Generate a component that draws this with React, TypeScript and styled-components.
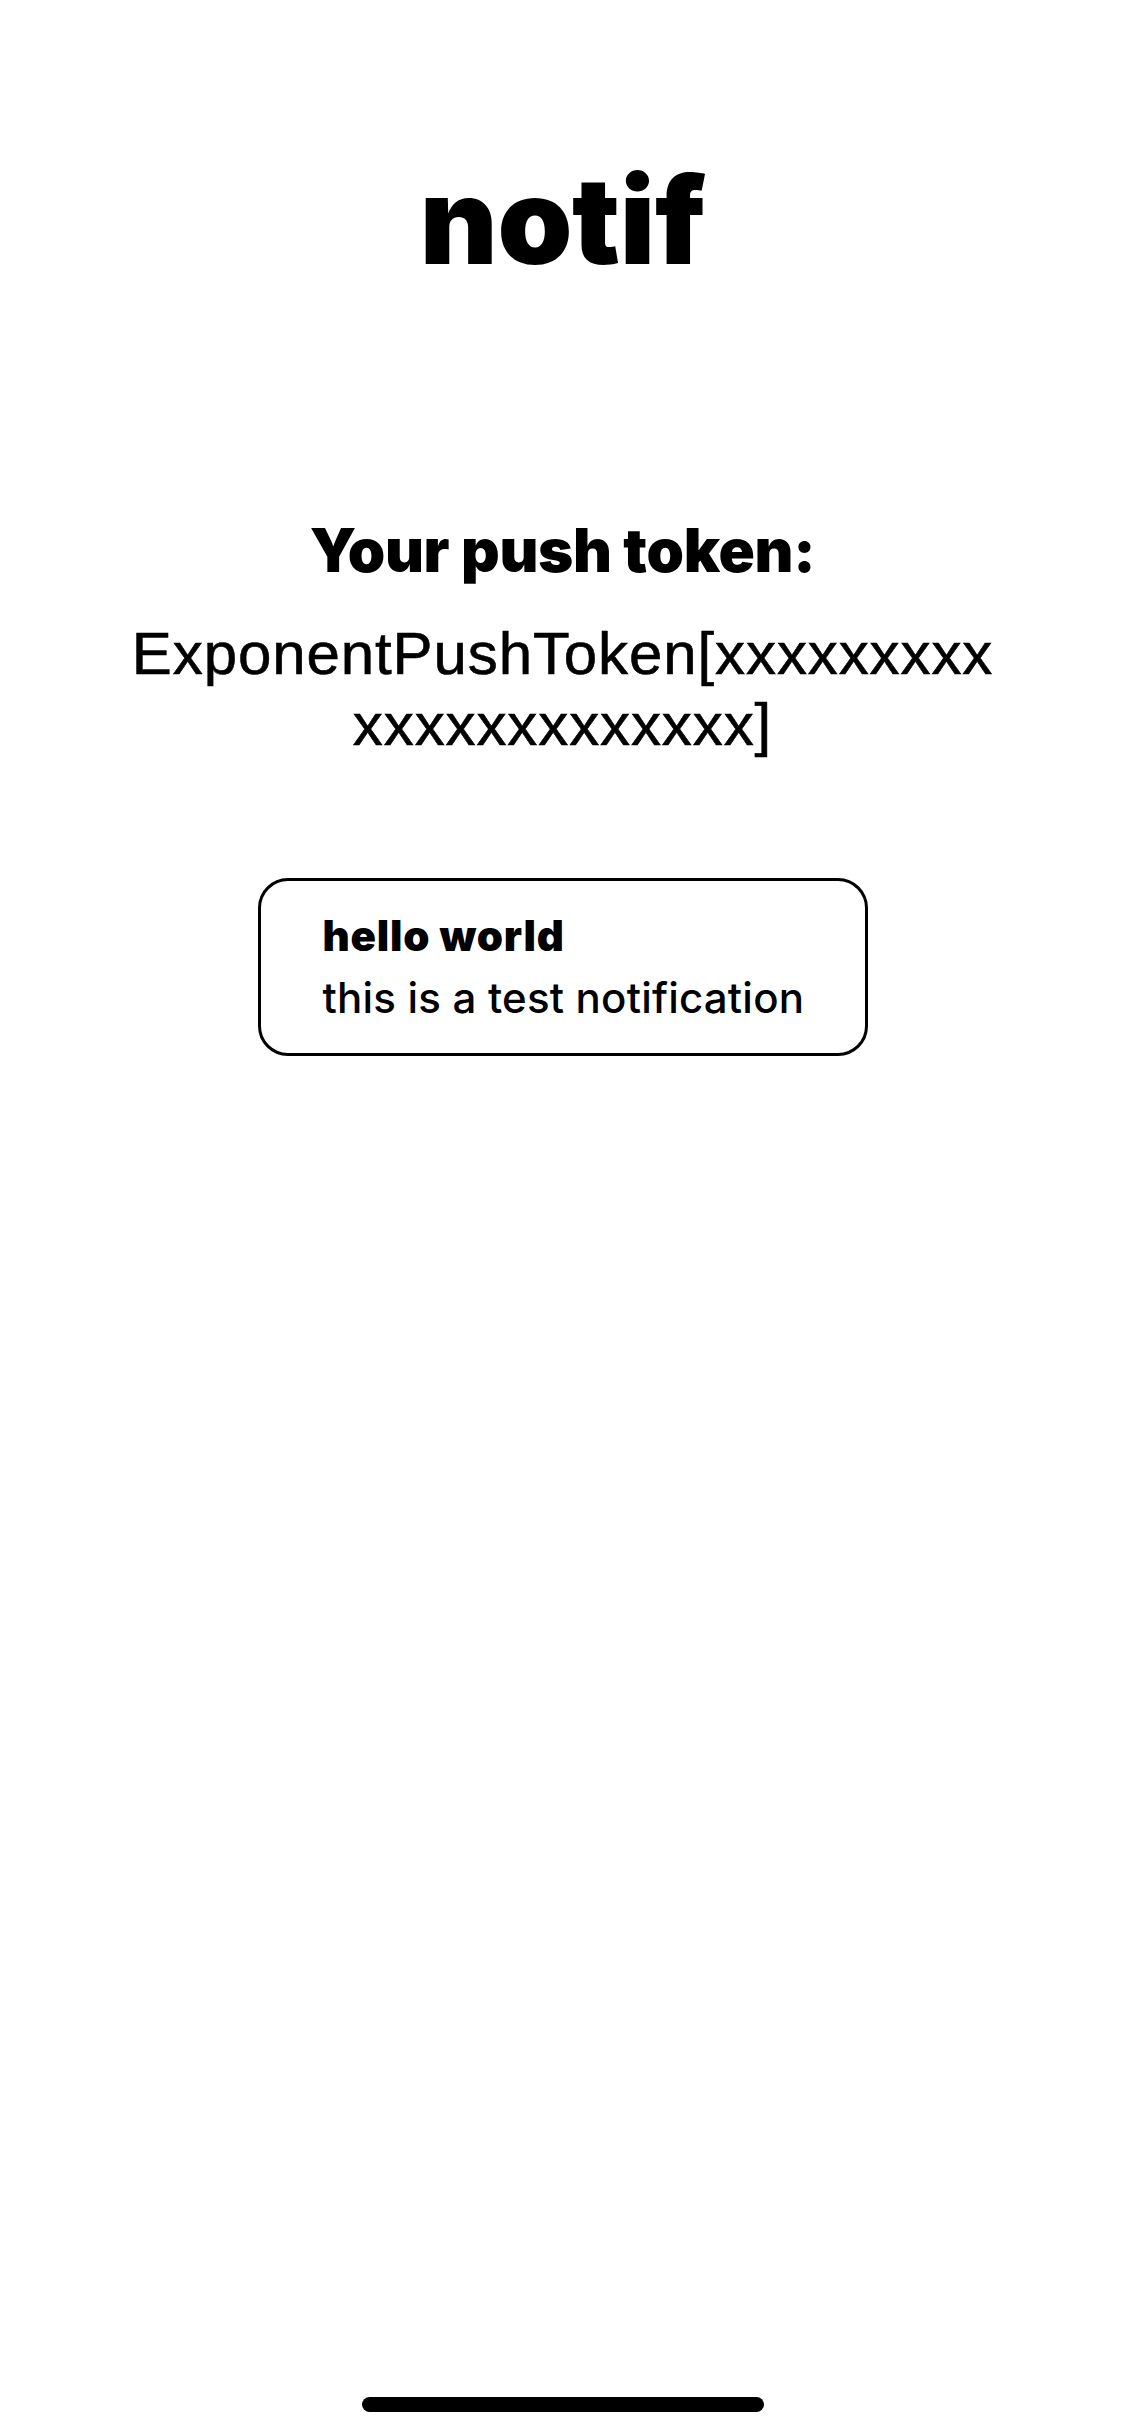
import React from "react";
import styled, { createGlobalStyle } from "styled-components";

const GlobalStyle = createGlobalStyle`
  html, body {
    margin: 0;
    padding: 0;
    background: #ffffff;
  }
  body {
    font-family: Inter, "Noto Sans", sans-serif;
    color: #000000;
  }
  * { box-sizing: border-box; }
`;

const Screen = styled.div`
  width: 1125px;
  min-height: 2436px;
  display: flex;
  flex-direction: column;
  align-items: center;
  padding-top: 151px;
  background: #ffffff;
`;

const Title = styled.h1`
  margin: 0;
  font-family: Inter, sans-serif;
  font-weight: 900;
  font-size: 120px;
  line-height: 140px;
  letter-spacing: -0.3px;
  color: #000;
`;

const TokenLabel = styled.h2`
  margin: 223px 0 0;
  font-family: Inter, sans-serif;
  font-weight: 900;
  font-size: 60px;
  line-height: 72px;
  letter-spacing: -0.3px;
  color: #000;
`;

const TokenValue = styled.p`
  margin: 32px 0 0;
  width: 884px;
  font-family: "Liberation Sans", Arial, sans-serif;
  font-weight: 400;
  font-size: 60px;
  line-height: 71px;
  letter-spacing: 0.9px;
  text-align: center;
  word-break: break-all;
  -webkit-text-stroke: 0.6px #000;
  color: #000;
`;

const NotificationCard = styled.button`
  margin-top: 118px;
  width: 610px;
  display: flex;
  flex-direction: column;
  align-items: flex-start;
  gap: 11px;
  padding: 29px 40px 30px 62px;
  border: 3px solid #000;
  border-radius: 30px;
  background: #fff;
  cursor: pointer;
  text-align: left;
`;

const CardLine = styled.span<{ $strong?: boolean }>`
  display: block;
  font-family: Inter, sans-serif;
  font-size: 42px;
  line-height: 51px;
  font-weight: ${(p) => (p.$strong ? 900 : 500)};
  letter-spacing: ${(p) => (p.$strong ? "0.8px" : "0.2px")};
  color: #000;
  white-space: nowrap;
`;

const HomeIndicator = styled.div`
  margin-top: auto;
  margin-bottom: 24px;
  width: 402px;
  height: 15px;
  border-radius: 8px;
  background: #000;
`;

export default function App() {
  const token = "ExponentPushToken[xxxxxxxxxxxxxxxxxxxxxx]";
  return (
    <>
      <GlobalStyle />
      <Screen>
        <Title>notif</Title>
        <TokenLabel>Your push token:</TokenLabel>
        <TokenValue>{token}</TokenValue>
        <NotificationCard type="button">
          <CardLine $strong>hello world</CardLine>
          <CardLine>this is a test notification</CardLine>
        </NotificationCard>
        <HomeIndicator />
      </Screen>
    </>
  );
}
